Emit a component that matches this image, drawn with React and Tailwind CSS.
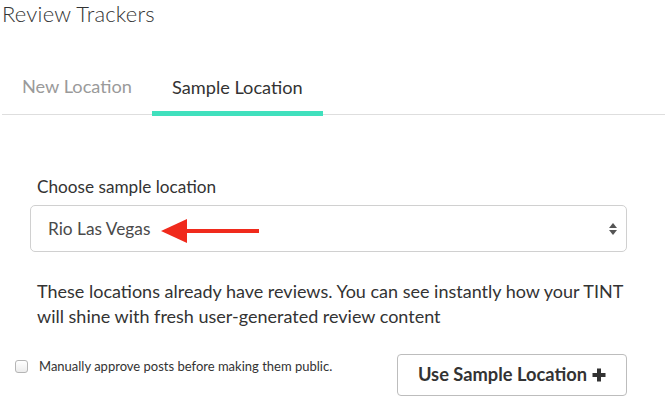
export default function App() {
  return (
    <main className="w-[665px] h-[408px] overflow-hidden bg-white font-['Lato',sans-serif] text-[#333]">
      {/* Header */}
      <h1 className="pl-[2px] pt-[1px] text-[22px] leading-[26px] font-light tracking-[0.2px] text-[#333]">Review Trackers</h1>

      {/* Tabs */}
      <div className="mt-[46px] ml-[2px] flex border-b border-[#dedede]">
        <button className="px-[20px] pt-[1px] pb-[16px] text-[18.2px] leading-[24px] text-[#9a9a9a]">New Location</button>
        <button className="px-[20px] pt-[1px] pb-[11px] -mb-[2px] border-b-[5px] border-[#40e0bd] text-[18.2px] leading-[24px] text-[#333]">
          Sample Location
        </button>
      </div>

      <div className="pl-[30px] pr-[38px]">
        <label className="block mt-[62px] pl-[7px] text-[17.2px] leading-[20px] text-[#333]">Choose sample location</label>
        <div className="mt-[8px] h-[47px] rounded-[5px] border border-[#d0d0d0] flex items-center pl-[17px] pr-[8px]">
          <span className="text-[17.3px] text-[#4a4a4a]">Rio Las Vegas</span>
          {/* red annotation arrow */}
          <svg className="ml-[11px] mt-[4px]" width="98" height="24" viewBox="0 0 98 24">
            <polygon points="0,12 26,0 26,24" fill="#f02a1c" />
            <rect x="25" y="10" width="73" height="4" fill="#f02a1c" />
          </svg>
          <svg className="ml-auto" width="10" height="14" viewBox="0 0 10 14">
            <polygon points="5,1 9,6 1,6" fill="#555" />
            <polygon points="5,13 9,8 1,8" fill="#555" />
          </svg>
        </div>

        <p className="mt-[27px] pl-[7px] text-[18px] leading-[25px] text-[#333]">
          These locations already have reviews. You can see instantly how your TINT will shine with fresh user-generated review content
        </p>
      </div>

      {/* Footer row */}
      <div className="mt-[25px] pl-[15px] pr-[38px] flex items-start justify-between">
        <label className="flex items-center gap-[11px] mt-[3px] text-[13px] text-[#333]">
          <span className="w-[13px] h-[13px] rounded-[3px] border border-[#b5b5b5] bg-gradient-to-b from-white to-[#ececec]" />
          Manually approve posts before making them public.
        </label>
        <button className="w-[230px] h-[42px] rounded-[4px] border border-[#bdbdbd] text-[18.3px] font-bold text-[#333] flex items-center justify-center gap-[5px]">
          Use Sample Location
          <svg width="14" height="14" viewBox="0 0 14 14">
            <rect x="5" y="0.5" width="4" height="13" fill="#333" />
            <rect x="0.5" y="5" width="13" height="4" fill="#333" />
          </svg>
        </button>
      </div>
    </main>
  );
}
